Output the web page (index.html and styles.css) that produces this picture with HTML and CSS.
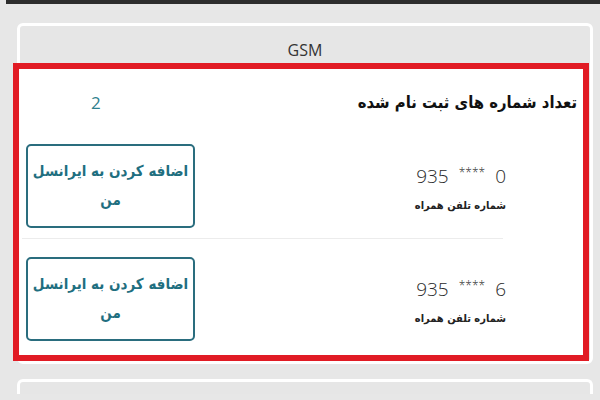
FILE: index.html
```html
<!DOCTYPE html>
<html lang="fa">
<head>
<meta charset="utf-8">
<title>GSM</title>
<link rel="stylesheet" href="styles.css">
</head>
<body>
<div class="topbar"></div>
<div class="card">
  <div class="card-head">GSM</div>
  <div class="highlight" dir="rtl">
    <div class="title-row">
      <div class="title">تعداد شماره های ثبت نام شده</div>
      <div class="count">2</div>
    </div>
    <div class="row row-first">
      <div class="info">
        <div class="number"><span>0</span><span class="stars">****</span><span>935</span></div>
        <div class="label">شماره تلفن همراه</div>
      </div>
      <button class="add-btn"><span class="btn-line">اضافه کردن به ایرانسل</span> من</button>
    </div>
    <div class="row row-last">
      <div class="info">
        <div class="number"><span>6</span><span class="stars">****</span><span>935</span></div>
        <div class="label">شماره تلفن همراه</div>
      </div>
      <button class="add-btn"><span class="btn-line">اضافه کردن به ایرانسل</span> من</button>
    </div>
  </div>
</div>
<div class="card card-next"></div>
</body>
</html>
```
FILE: styles.css
```css
html, body {
  margin: 0;
  padding: 0;
}
body {
  width: 600px;
  height: 400px;
  overflow: hidden;
  background: #e7e7e7;
  font-family: "DejaVu Sans Condensed", "DejaVu Sans", sans-serif;
  color: #222;
}
.topbar {
  height: 4px;
  margin-left: 6px;
  background: #2d2d2d;
}
.card {
  margin: 19px 7px 0 17px;
  border: 3px solid #ffffff;
  border-radius: 6px;
  background: #e6e6e6;
}
.card-next {
  margin-top: 15px;
  height: 12px;
  border-bottom: 0;
  border-radius: 6px 6px 0 0;
}
.card-head {
  box-sizing: border-box;
  height: 37px;
  padding-top: 14px;
  line-height: 20px;
  text-align: center;
  font-family: "Open Sans", sans-serif;
  font-weight: 400;
  font-size: 16px;
  color: #333;
}
.highlight {
  margin: 0 1px 0 -7px;
  border: 6px solid #e11b24;
  background: #ffffff;
}
.title-row {
  display: flex;
  justify-content: space-between;
  align-items: center;
  height: 34px;
  padding: 16px 6px 0 72px;
}
.title {
  font-weight: bold;
  font-size: 16.5px;
  color: #111;
}
.count {
  font-family: "Open Sans", sans-serif;
  font-size: 17px;
  color: #2f7f8e;
}
.row {
  display: flex;
  justify-content: space-between;
  align-items: flex-start;
  margin: 0 80px 0 3px;
}
.row-first {
  padding: 25px 0 10px 0;
  border-bottom: 1px solid #ececec;
}
.row-last {
  padding: 18px 0 14px 0;
}
.info {
  display: flex;
  flex-direction: column;
  align-items: flex-start;
  margin-top: 20px;
  margin-right: -3px;
}
.number {
  display: flex;
  align-items: flex-start;
  gap: 10px;
  height: 24px;
  line-height: 24px;
  font-family: "Open Sans", sans-serif;
  font-weight: 300;
  font-size: 19px;
  color: #2a2a2a;
}
.stars {
  font-size: 12px;
  line-height: 18px;
}
.label {
  margin-top: 9px;
  font-size: 11px;
  line-height: 18px;
  font-weight: bold;
  color: #222;
}
.add-btn {
  box-sizing: border-box;
  width: 169px;
  height: 84px;
  margin-left: 4px;
  padding: 0;
  border: 2px solid #2a6d7e;
  border-radius: 5px;
  background: #ffffff;
  font-family: "DejaVu Sans Condensed", "DejaVu Sans", sans-serif;
  font-weight: bold;
  font-size: 15px;
  line-height: 29px;
  color: #1f6f80;
  text-align: center;
}
.btn-line {
  display: block;
  white-space: nowrap;
}
```
